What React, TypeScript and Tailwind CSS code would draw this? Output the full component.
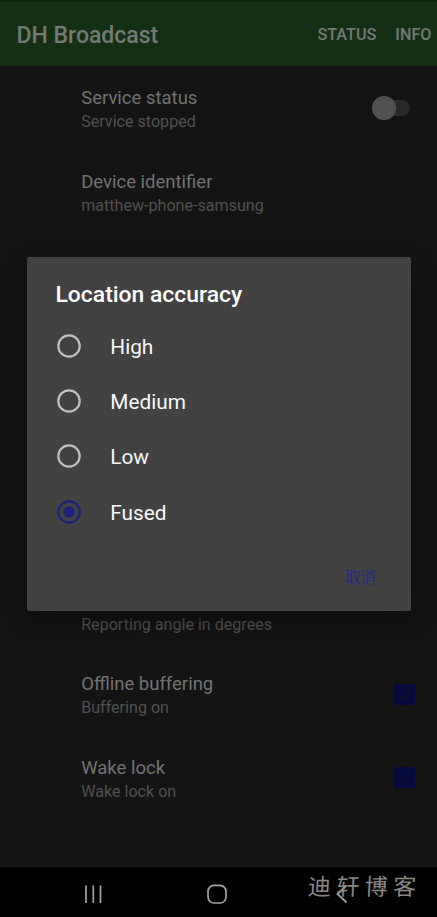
import React from "react";

interface RowProps {
  title?: string;
  summary: string;
  children?: React.ReactNode;
}

const PreferenceRow: React.FC<RowProps> = ({ title, summary, children }) => (
  <div className="flex h-[83.7px] shrink-0 items-center pl-[81.2px]">
    <div className="flex-1">
      <p className="h-[23.4px] text-[18.5px] leading-[23px] text-[#727272]">{title}</p>
      <p className="h-[22px] text-[16.1px] leading-[23px] text-[#505050]">{summary}</p>
    </div>
    {children}
  </div>
);

const CheckedBox = () => (
  <svg className="mr-[22px] mb-[3px] h-[21px] w-[21px]" viewBox="0 0 21 21">
    <rect width="21" height="21" rx="1.5" fill="#070a3c" />
    <path d="M4.5 10.8l4 4 8-8.5" fill="none" stroke="#10102c" strokeWidth="2" />
  </svg>
);

interface OptionProps {
  label: string;
  selected?: boolean;
}

const RadioOption: React.FC<OptionProps> = ({ label, selected }) => (
  <div className="flex h-[55.4px] items-center pl-[30px]">
    <svg className="h-6 w-6" viewBox="0 0 24 24" fill="none">
      <circle cx="12" cy="12" r="10.7" stroke={selected ? "#1b237e" : "#c1c1c1"} strokeWidth="2.2" />
      {selected && <circle cx="12" cy="12" r="5.8" fill="#1b237e" />}
    </svg>
    <span className="pt-0.5 pl-[29.3px] text-[20.8px] leading-6 text-[#f8f8f8]">{label}</span>
  </div>
);

export default function App() {
  return (
    <div className="relative flex h-[917px] w-[437px] flex-col overflow-hidden bg-[#141414] font-['Roboto','Noto_Sans_CJK_SC',sans-serif]">
      <header className="flex h-[66px] shrink-0 items-center border-t-2 border-[#062408] bg-[#143014] pt-0.5 pl-[16.5px] font-medium text-[#737973]">
        <h1 className="flex-1 pt-[1.5px] text-[23px]">DH Broadcast</h1>
        <span className="text-[16.2px]">STATUS</span>
        <span className="mr-[5.5px] ml-[19px] text-[16.2px]">INFO</span>
      </header>

      <main className="flex flex-1 flex-col pt-[1.9px]">
        <PreferenceRow title="Service status" summary="Service stopped">
          <div className="mr-[27px] mb-1 flex h-4 w-[38px] items-center rounded-full bg-linear-to-r from-transparent from-30% to-[#282828] to-30%">
            <div className="h-6 w-6 rounded-full bg-[#505050]" />
          </div>
        </PreferenceRow>
        <PreferenceRow title="Device identifier" summary="matthew-phone-samsung" />
        {/* rows covered by the dialog */}
        <div className="h-[334.8px] shrink-0" />
        <PreferenceRow summary="Reporting angle in degrees" />
        <PreferenceRow title="Offline buffering" summary="Buffering on">
          <CheckedBox />
        </PreferenceRow>
        <PreferenceRow title="Wake lock" summary="Wake lock on">
          <CheckedBox />
        </PreferenceRow>
      </main>

      <nav className="relative flex h-[50px] shrink-0 items-center bg-black">
        <svg className="h-full w-[290px]" viewBox="0 0 290 50" fill="none" stroke="#a3a3a3">
          <path d="M86 18.5v17.5M93.3 18.5v17.5M100.5 18.5v17.5" strokeWidth="1.7" />
          <rect x="208" y="18.3" width="18" height="17.7" rx="6" strokeWidth="1.7" />
        </svg>
        <svg className="h-full w-[147px]" viewBox="0 0 147 50" fill="none" stroke="#a3a3a3">
          <path d="M56.5 18.5l-9 8.5 9 8.5" strokeWidth="1.8" />
        </svg>
        {/* watermark lies over the back key */}
        <span className="absolute top-[3px] left-[308px] -skew-x-3 font-['Noto_Sans_CJK_SC',sans-serif] text-[23px] leading-[30px] font-normal tracking-[5.4px] whitespace-nowrap text-[#8b8783]">
          迪轩博客
        </span>
      </nav>

      <section className="absolute top-[257px] left-[27px] flex h-[354px] w-[384px] flex-col rounded-[2px] bg-[#424242] shadow-[0_8px_24px_rgba(0,0,0,0.4)]">
        <h2 className="pt-[23.5px] pl-[28.5px] text-[22.9px] leading-7 font-medium text-white">Location accuracy</h2>
        <div className="pt-[9.5px]">
          <RadioOption label="High" />
          <RadioOption label="Medium" />
          <RadioOption label="Low" />
          <RadioOption label="Fused" selected />
        </div>
        <button className="mt-[28px] mr-[35px] self-end text-[15.5px] leading-5 text-[#272d83]">取消</button>
      </section>
    </div>
  );
}
